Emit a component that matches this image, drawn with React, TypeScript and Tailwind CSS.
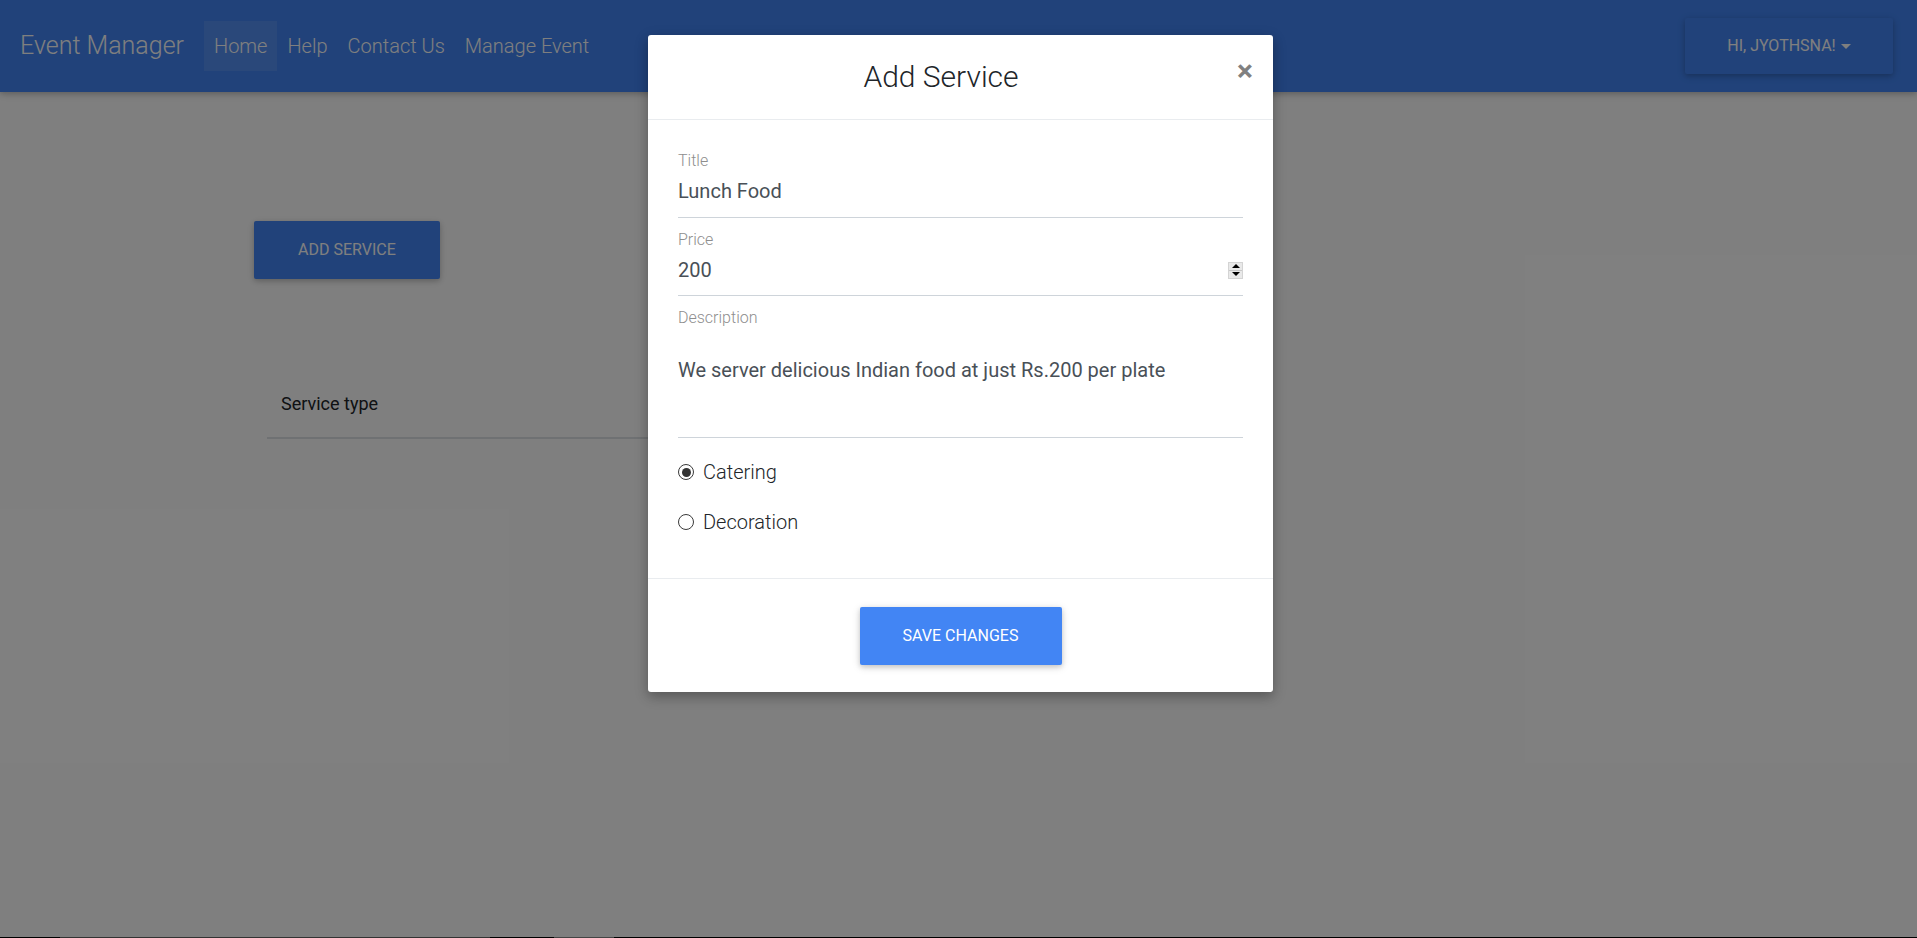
import React from "react";

function Radio({ checked, label }: { checked: boolean; label: string }) {
  return (
    <div className="flex items-center h-[30px]">
      <span className="relative flex items-center justify-center w-[16px] h-[16px] rounded-full border-[1.5px] border-[#3a3a3a] bg-white">
        {checked && <span className="block w-[9px] h-[9px] rounded-full bg-[#333]" />}
      </span>
      <span className="ml-[9px] text-[20px] font-light leading-[30px] text-[#212529]">{label}</span>
    </div>
  );
}

export default function App() {
  const btnShadow =
    "shadow-[0_2px_5px_0_rgba(0,0,0,0.16),0_2px_10px_0_rgba(0,0,0,0.12)]";
  return (
    <div className="flex flex-col w-full h-[938px] overflow-hidden bg-white font-['Roboto',sans-serif]">
      <div className="relative flex-1 overflow-hidden">
        {/* Navbar */}
        <nav className={`flex items-center h-[92px] px-5 bg-[#4285f4] ${btnShadow}`}>
          <span className="text-[25px] font-light text-white mr-5 leading-[38px]">Event Manager</span>
          <ul className="flex items-center">
            <li className="px-2.5 py-2.5 text-[20px] font-light leading-[30px] text-white bg-white/10">Home</li>
            <li className="px-2.5 py-2.5 text-[20px] font-light leading-[30px] text-white">Help</li>
            <li className="px-2.5 py-2.5 text-[20px] font-light leading-[30px] text-white">Contact Us</li>
            <li className="px-2.5 py-2.5 text-[20px] font-light leading-[30px] text-white">Manage Event</li>
          </ul>
          <div className="ml-auto mr-[4px]">
            <button
              className={`flex items-center justify-center w-[208px] h-[56px] rounded-[2px] bg-[#4285f4] text-white text-[16px] font-normal uppercase ${btnShadow}`}
            >
              HI, JYOTHSNA!
              <span className="inline-block ml-[5px] w-0 h-0 border-x-[5px] border-x-transparent border-t-[5px] border-t-white" />
            </button>
          </div>
        </nav>

        {/* Page content */}
        <div className="pl-[254px] pt-[129px]">
          <button
            className={`w-[186px] h-[58px] rounded-[2px] bg-[#4285f4] text-white text-[16px] font-normal uppercase ${btnShadow}`}
          >
            ADD SERVICE
          </button>
        </div>
        <div className="ml-[267px] mt-[111px] w-[840px]">
          <div className="pl-[14px] pb-[19px] border-b-2 border-[#dee2e6] text-[18px] leading-[28px] text-[#212529]">
            Service type
          </div>
        </div>

        {/* Overlay with modal */}
        <div className="absolute inset-0 bg-black/50 flex justify-center pl-[4px]">
          <div className="mt-[35px] w-[625px] h-[657px] self-start flex flex-col bg-white rounded-[3px] shadow-[0_5px_11px_0_rgba(0,0,0,0.18),0_4px_15px_0_rgba(0,0,0,0.15)]">
            {/* Header */}
            <div className="flex items-center h-[85px] px-5 border-b border-[#e9ecef]">
              <h4 className="flex-1 text-center text-[30px] font-light leading-[45px] text-[#212529] mb-[1px]">Add Service</h4>
              <span className="w-[39px] text-right mb-[12px] text-[30px] font-bold leading-[30px] text-[#808080]">×</span>
            </div>

            {/* Body */}
            <div className="flex-1 px-[30px] pt-[29px]">
              <div className="flex flex-col">
                <label className="h-6 leading-6 text-[16px] font-light text-[#8e8e8e]">Title</label>
                <div className="mt-[3px] pb-[11px] border-b border-[#ced4da]">
                  <div className="h-[30px] leading-[30px] text-[20px] text-[#495057]">Lunch Food</div>
                </div>
              </div>
              <div className="flex flex-col mt-[10px]">
                <label className="h-6 leading-6 text-[16px] font-light text-[#8e8e8e]">Price</label>
                <div className="mt-[3px] pb-[10px] border-b border-[#ced4da]">
                  <div className="flex items-center h-[30px]">
                    <span className="flex-1 leading-[30px] text-[20px] text-[#495057]">200</span>
                    <span className="flex flex-col w-[15px] h-[17px] bg-[#e9e9e9] border border-[#d4d4d4]">
                      <span className="flex-1 flex items-center justify-center border-b border-[#c8c8c8]">
                        <span className="w-0 h-0 border-x-[4px] border-x-transparent border-b-[4px] border-b-black" />
                      </span>
                      <span className="flex-1 flex items-center justify-center">
                        <span className="w-0 h-0 border-x-[4px] border-x-transparent border-t-[4px] border-t-black" />
                      </span>
                    </span>
                  </div>
                </div>
              </div>
              <div className="flex flex-col mt-[10px]">
                <label className="h-6 leading-6 text-[16px] font-light text-[#8e8e8e]">Description</label>
                <div className="h-[108px] pt-[25px] border-b border-[#ced4da]">
                  <div className="leading-[30px] text-[20px] text-[#495057]">
                    We server delicious Indian food at just Rs.200 per plate
                  </div>
                </div>
              </div>
              <div className="mt-[19px] flex flex-col gap-[20px]">
                <Radio checked label="Catering" />
                <Radio checked={false} label="Decoration" />
              </div>
            </div>

            {/* Footer */}
            <div className="flex justify-center h-[114px] pt-[28px] border-t border-[#e9ecef]">
              <button
                className={`w-[202px] h-[58px] rounded-[2px] bg-[#4285f4] text-white text-[16px] font-normal uppercase ${btnShadow}`}
              >
                SAVE CHANGES
              </button>
            </div>
          </div>
        </div>
      </div>
      <div className="flex h-px shrink-0">
        <div className="w-[60px] bg-black" />
        <div className="w-[430px] bg-[#333]" />
        <div className="w-[64px] bg-black" />
        <div className="w-[60px] bg-[#444]" />
        <div className="flex-1 bg-black" />
      </div>
    </div>
  );
}
